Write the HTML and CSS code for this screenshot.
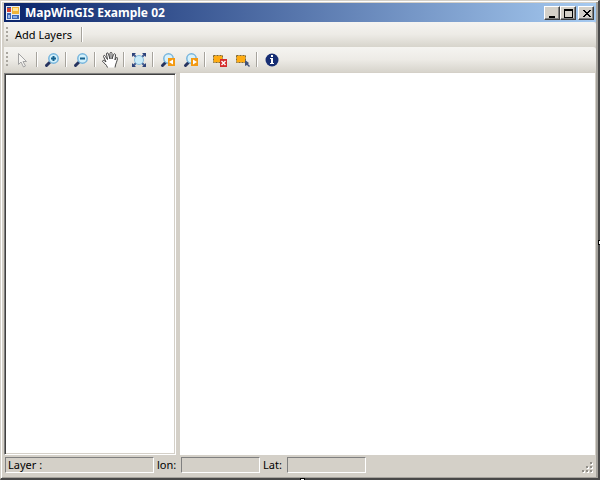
FILE: index.html
```html
<!DOCTYPE html>
<html lang="en">
<head>
<meta charset="utf-8">
<title>MapWinGIS Example 02</title>
<link rel="stylesheet" href="styles.css">
</head>
<body>
<div class="window">
  <header class="titlebar">
    <svg class="app-icon" width="16" height="16" viewBox="0 0 16 16" aria-hidden="true">
      <path fill="#e6ecf5" d="M1 1h14v14H1z"/><path fill="#31509a" d="M2 2h4v5H2z"/>
      <path fill="#d5402b" d="M2 3h4v4H2z"/>
      <path fill="#f0b437" d="M7 2h7v7H7z"/><path fill="#ffe395" d="M8 3h5v3H8z"/>
      <path fill="#3c66b5" d="M2 8h4v6H2z"/><path fill="#96b5e5" d="M3 10h2v3H3z"/>
      <path fill="#3c66b5" d="M7 10h7v4H7z"/><path fill="#85a8df" d="M8 11h4v2H8z"/>
    </svg>
    <h1 class="title">MapWinGIS Example 02</h1>
    <div class="controls">
      <button class="control" aria-label="Minimize"><svg width="12" height="10"><path d="M2 7h6v2H2z"/></svg></button>
      <button class="control" aria-label="Maximize"><svg width="12" height="10"><path fill-rule="evenodd" d="M1 0h9v9H1zM2 2v6h7V2z"/></svg></button>
      <button class="control close" aria-label="Close"><svg width="12" height="10"><path d="M2 1h2v1h1v1h2V2h1V1h2v1H9v1H8v1H7v1h1v1h1v1h1v1H8V7H7V6H5v1H4v1H2V7h1V6h1V5h1V4H4V3H3V2H2z"/></svg></button>
    </div>
  </header>
  <nav class="toolbar">
    <span class="grip"></span>
    <button class="menu">Add Layers</button>
    <span class="separator"></span>
  </nav>
  <nav class="toolbar">
    <span class="grip"></span>
    <button class="tool" aria-label="Select"><svg width="16" height="16"><path fill="#f5f4f1" stroke="#a3a3a3" d="M3.500 1.500v11l2.500-2.500 2.500 5 2-1-2.500-4.500h3.500z"/></svg></button>
    <span class="separator"></span>
    <button class="tool" aria-label="Zoom in"><svg width="16" height="16"><path stroke="#26335f" stroke-width="3" stroke-linecap="round" d="M2.500 13.500l3-3"/><circle cx="9.500" cy="6.500" r="4.700" fill="#d2f0fb" stroke="#77b5dc" stroke-width="1.500"/><path stroke="#17628f" stroke-width="2" d="M7 6.500h5M9.500 4v5"/></svg></button>
    <span class="separator"></span>
    <button class="tool" aria-label="Zoom out"><svg width="16" height="16"><path stroke="#26335f" stroke-width="3" stroke-linecap="round" d="M2.500 13.500l3-3"/><circle cx="9.500" cy="6.500" r="4.700" fill="#d2f0fb" stroke="#77b5dc" stroke-width="1.500"/><path stroke="#17628f" stroke-width="2" d="M7 6.500h5"/></svg></button>
    <span class="separator"></span>
    <button class="tool" aria-label="Pan"><svg width="16" height="16"><path fill="#fff" stroke="#444" stroke-linejoin="round" d="M5.500 15.500C4.500 12.500 2 11 .5 9.500c0-1.500 1.500-1.500 3.500.5L1.500 4.500c0-1.500 1.500-1.500 2 0l2 3L4.500 2c0-1.500 1.500-1.500 2 0l1.500 5V1.500c0-1.500 2-1.500 2 0V7l1.500-4.500c1-1.500 2-.5 2 .5L13 8l1-2c1-1 1.500-.5 1.500.5-.5 3.500-2 5-2.500 9"/></svg></button>
    <span class="separator"></span>
    <button class="tool" aria-label="Full extent"><svg width="16" height="16"><path stroke="#465d93" stroke-width="2" d="M2 2l12 12M14 2L2 14"/><circle cx="8" cy="8" r="4.500" fill="#c9ebf8" stroke="#86bcdc"/><path fill="#2d4279" d="M1 1h4L1 5zM11 1h4v4zM1 11l4 4H1zM15 11v4h-4z"/></svg></button>
    <span class="separator"></span>
    <button class="tool" aria-label="Previous extent"><svg width="16" height="16"><path stroke="#26335f" stroke-width="3" stroke-linecap="round" d="M2.500 13.500l3-3"/><circle cx="8.500" cy="6.500" r="4.700" fill="#d8f1fa" stroke="#77b5dc" stroke-width="1.500"/><path fill="#f39a13" d="M8 6h7v8H8z"/><path fill="#fff" d="M13 7.500v5L9 10z"/></svg></button>
    <button class="tool" aria-label="Next extent"><svg width="16" height="16"><path stroke="#26335f" stroke-width="3" stroke-linecap="round" d="M2.500 13.500l3-3"/><circle cx="8.500" cy="6.500" r="4.700" fill="#d8f1fa" stroke="#77b5dc" stroke-width="1.500"/><path fill="#f39a13" d="M8 6h7v8H8z"/><path fill="#fff" d="M10 7.500v5l4-2.500z"/></svg></button>
    <span class="separator"></span>
    <button class="tool" aria-label="Clear selection"><svg width="16" height="16"><path fill="#ffac12" stroke="#7f6835" stroke-dasharray="2 1" d="M1.500 3.500h9v7h-9z"/><path fill="#d42c2c" d="M8 7h7v8H8z"/><path stroke="#fff" stroke-width="1.400" d="M9.500 9l4 4M13.500 9l-4 4"/></svg></button>
    <button class="tool" aria-label="Select shapes"><svg width="16" height="16"><path fill="#ffac12" stroke="#7f6835" stroke-dasharray="2 1" d="M1.500 3.500h9v7h-9z"/><path fill="#3f507a" d="M10 8l4 3-1 1 2 2-1 1-2-2-2 1z"/></svg></button>
    <span class="separator"></span>
    <button class="tool" aria-label="Identify"><svg width="16" height="16"><circle cx="8" cy="8" r="6.500" fill="#172e73"/><path fill="#fff" d="M7 3h2v2H7zM6 6h3v5h1v1H6v-1h1V7H6z"/></svg></button>
  </nav>
  <main class="workspace">
    <aside class="layers" aria-label="Layers"></aside>
    <section class="map" aria-label="Map"></section>
  </main>
  <footer class="status">
    <span class="field layer">Layer :</span>
    <span class="label">lon:</span><span class="field coordinate"></span>
    <span class="label">Lat:</span><span class="field coordinate"></span>
    <svg class="resize" width="12" height="12" aria-hidden="true"><path fill="#fff" d="M9 1h2v2H9zM5 5h2v2H5zM9 5h2v2H9zM1 9h2v2H1zM5 9h2v2H5zM9 9h2v2H9z"/><path fill="#918e88" d="M8 0h2v2H8zM4 4h2v2H4zM8 4h2v2H8zM0 8h2v2H0zM4 8h2v2H4zM8 8h2v2H8z"/></svg>
  </footer>
  <span class="handle handle-right"></span>
  <span class="handle handle-bottom"></span>
</div>
</body>
</html>
```

FILE: styles.css
```css
* { box-sizing: border-box; }
html, body { overflow: hidden; }
body {
  margin: 0;
  font: 11px/16px "Noto Sans", sans-serif;
  color: #000;
}
button {
  font: inherit;
  color: inherit;
  padding: 0;
  border: 0;
  background: none;
}
svg { display: block; fill: none; flex: none; }
.window {
  position: relative;
  display: flex;
  flex-direction: column;
  height: 100vh;
  padding: 2px;
  border: 1px solid #d4d0c8;
  border-right: 2px solid #484848;
  border-bottom: 2px solid #484848;
  background: #d4d0c8;
  box-shadow: inset 1px 1px #fff, inset -2px -1px #a5a29c;
}
.titlebar {
  display: flex;
  align-items: center;
  height: 19px;
  margin-left: 1px;
  padding: 0 2px 0 1px;
  background: linear-gradient(90deg, #0a246a, #a6caf0);
}
.title {
  flex: 1;
  margin: 0 4px;
  color: #fff;
  font: bold 12px/16px "Noto Sans", sans-serif;
}
.controls { display: flex; }
.control {
  width: 16px;
  height: 14px;
  padding: 2px;
  border: 1px solid;
  border-color: #fff #404040 #404040 #fff;
  background: #d4d0c8;
  box-shadow: inset -1px -1px #808080;
}
.control svg { fill: #000; }
.close { margin-left: 2px; }
.toolbar {
  display: flex;
  align-items: center;
  height: 25px;
  margin-left: 1px;
  padding-left: 2px;
  border-radius: 0 3px 3px 0;
  background: linear-gradient(#f5f4f1, #edebe6 50%, #d7d4cc);
}
.grip {
  width: 2px;
  height: 16px;
  margin-right: 3px;
  background: repeating-linear-gradient(#a9a69f 0 2px, transparent 2px 4px);
}
.menu { padding: 0 4px; margin-right: 3px; }
.tool { display: grid; place-items: center; width: 23px; height: 22px; }
.separator {
  width: 2px;
  height: 15px;
  margin: 0 2px;
  border-left: 1px solid #a6a39c;
  border-right: 1px solid #fff;
}
.workspace { display: flex; flex: 1; min-height: 0; margin: 1px 1px 0; }
.layers {
  flex: 0 0 172px;
  border: 1px solid;
  border-color: #808080 #fff #fff #808080;
  background: #fff;
  box-shadow: inset 1px 1px #404040, inset -1px -1px #d4d0c8;
}
.map { flex: 1; margin-left: 4px; background: #fff; }
.status {
  display: flex;
  align-items: flex-start;
  height: 21px;
  padding: 2px 0 0 2px;
}
.field {
  height: 16px;
  padding-left: 2px;
  border: 1px solid;
  border-color: #808080 #fff #fff #808080;
  line-height: 14px;
}
.layer { width: 149px; }
.coordinate { width: 79px; }
.label { width: 27px; padding-left: 3px; }
.resize { align-self: flex-end; margin: 0 2px 2px auto; }
.handle {
  position: absolute;
  width: 5px;
  height: 5px;
  border: 1px solid #000;
  background: #fff;
}
.handle-right { right: -5px; top: 50%; }
.handle-bottom { left: 50%; bottom: -5px; }
```
